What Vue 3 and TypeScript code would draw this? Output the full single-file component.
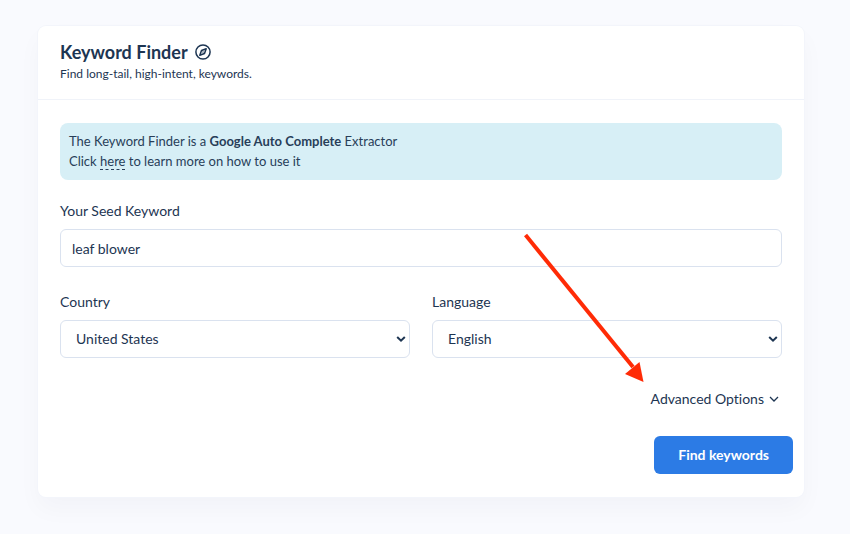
<script setup lang="ts">
import { ref } from 'vue'

const keyword = ref('leaf blower')
const country = ref('United States')
const language = ref('English')
const countries: string[] = ['United States']
const languages: string[] = ['English']
</script>

<template>
  <main class="page">
    <form class="card" @submit.prevent>
      <header class="card-header">
        <h1 class="title">
          Keyword Finder
          <svg class="compass" viewBox="0 0 16 16" aria-hidden="true">
            <circle cx="8" cy="8" r="7.1" />
            <path d="M11.2 4.8 9.500 9.500 4.800 11.200 6.500 6.500Z" />
            <circle class="dot" cx="8" cy="8" r="0.7" />
          </svg>
        </h1>
        <p class="subtitle">Find long-tail, high-intent, keywords.</p>
      </header>

      <div class="card-body">
        <div class="notice">
          <p>The Keyword Finder is a <strong>Google Auto Complete</strong> Extractor</p>
          <p>Click <a href="#">here</a> to learn more on how to use it</p>
        </div>

        <div class="field">
          <label for="seed">Your Seed Keyword</label>
          <input id="seed" v-model="keyword" class="control" type="text" />
        </div>

        <div class="columns">
          <div class="field">
            <label for="country">Country</label>
            <div class="select-wrap">
              <select id="country" v-model="country" class="control">
                <option v-for="item in countries" :key="item">{{ item }}</option>
              </select>
              <svg class="select-arrow" viewBox="0 0 10 8" aria-hidden="true"><path d="M1.2 2 5 5.7 8.8 2" /></svg>
            </div>
          </div>
          <div class="field">
            <label for="language">Language</label>
            <div class="select-wrap">
              <select id="language" v-model="language" class="control">
                <option v-for="item in languages" :key="item">{{ item }}</option>
              </select>
              <svg class="select-arrow" viewBox="0 0 10 8" aria-hidden="true"><path d="M1.2 2 5 5.7 8.8 2" /></svg>
            </div>
          </div>
        </div>

        <div class="advanced-row">
          <button class="advanced" type="button">
            Advanced Options
            <svg class="chevron" viewBox="0 0 10 8" aria-hidden="true"><path d="M1 2 5 6 9 2" /></svg>
            <svg class="pointer" viewBox="0 0 120 150" aria-hidden="true">
              <path class="shaft" d="M1.500 2 109 134" />
              <path class="head" d="M119.500 149 101 141 115.500 129Z" />
            </svg>
          </button>
        </div>
      </div>

      <footer class="card-footer">
        <button class="submit" type="submit">Find keywords</button>
      </footer>
    </form>
  </main>
</template>

<style>
body {
  margin: 0;
  background: #f9fafe;
}
</style>

<style scoped>
* {
  box-sizing: border-box;
}

.page {
  min-height: 100vh;
  padding: 26px 46px 38px 38px;
  background: #f9fafe;
  color: #1d3552;
  font-family: Lato, "Liberation Sans", sans-serif;
  font-size: 14px;
  font-variant-ligatures: none;
  line-height: 20px;
}

.card {
  border-radius: 8px;
  background: #fff;
  box-shadow: 0 0 0 1px #f3f5fb, 0 12px 24px rgba(18, 38, 63, 0.03);
}

.card-header {
  padding: 13px 22px 16px;
  border-bottom: 1px solid #f0f3f9;
}

h1,
p {
  margin: 0;
}

.title {
  display: flex;
  align-items: center;
  gap: 7px;
  font-size: 18px;
  font-weight: 700;
  line-height: 26px;
}

.compass {
  width: 16px;
  height: 16px;
  fill: none;
  stroke: currentColor;
  stroke-width: 1.5;
  stroke-linejoin: round;
}

.compass .dot {
  fill: currentColor;
  stroke: none;
}

.subtitle {
  font-size: 12px;
  line-height: 18px;
}

.card-body {
  padding: 23px 22px 0;
}

.notice {
  margin-bottom: 21px;
  padding: 8px 9px 9px;
  border-radius: 8px;
  background: #d7eff6;
  color: #283e59;
  font-size: 13px;
}

.notice a {
  border-bottom: 1px dashed currentColor;
  color: inherit;
  text-decoration: none;
}

.field {
  display: grid;
  gap: 8px;
  margin-bottom: 25px;
}

.control {
  display: block;
  width: 100%;
  height: 38px;
  padding: 0 11px;
  border: 1px solid #dae2ef;
  border-radius: 6px;
  outline: 0;
  background: #fff;
  color: inherit;
  font: inherit;
}

.columns {
  display: grid;
  grid-template-columns: 1fr 1fr;
  gap: 22px;
}

.select-wrap {
  position: relative;
}

select.control {
  padding: 0 30px 0 15px;
  appearance: none;
}

.select-arrow {
  position: absolute;
  top: 15px;
  right: 4px;
  width: 10px;
  height: 8px;
  fill: none;
  stroke: currentColor;
  stroke-width: 2;
  pointer-events: none;
}

.advanced-row {
  display: flex;
  justify-content: flex-end;
  padding: 6px 3px 0 0;
}

.advanced {
  position: relative;
  display: flex;
  align-items: center;
  gap: 5px;
  padding: 0;
  border: 0;
  background: none;
  color: inherit;
  font: inherit;
}

.chevron {
  width: 10px;
  height: 8px;
  fill: none;
  stroke: currentColor;
  stroke-width: 1.3;
}

.pointer {
  position: absolute;
  right: 135px;
  bottom: 26px;
  width: 120px;
  height: 150px;
  pointer-events: none;
}

.shaft {
  fill: none;
  stroke: #ff2b06;
  stroke-width: 4;
}

.head {
  fill: #ff2b06;
}

.card-footer {
  display: flex;
  justify-content: flex-end;
  padding: 27px 11px 23px;
}

.submit {
  height: 38px;
  padding: 0 24px;
  border: 0;
  border-radius: 6px;
  background: #2c7be5;
  color: #fff;
  font: inherit;
  font-weight: 700;
}
</style>
